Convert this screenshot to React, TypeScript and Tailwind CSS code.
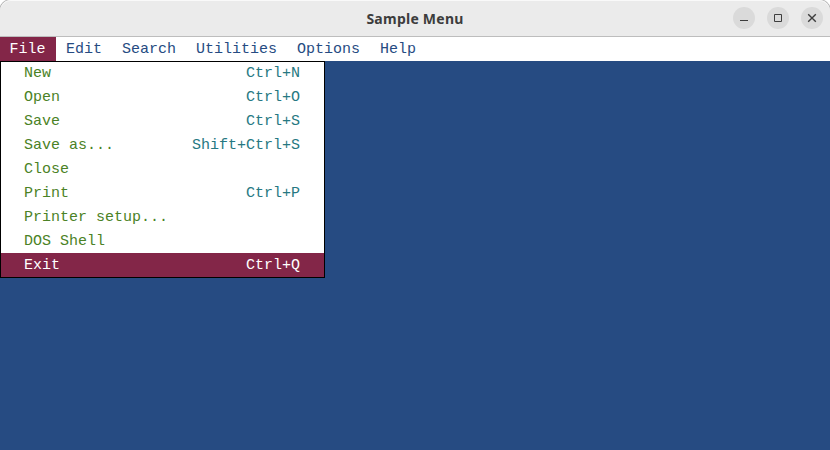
import type { ReactNode } from "react";

type Item = { label: string; shortcut?: string };

const menus = ["File", "Edit", "Search", "Utilities", "Options", "Help"];

const items: Item[] = [
  { label: "New", shortcut: "Ctrl+N" },
  { label: "Open", shortcut: "Ctrl+O" },
  { label: "Save", shortcut: "Ctrl+S" },
  { label: "Save as...", shortcut: "Shift+Ctrl+S" },
  { label: "Close" },
  { label: "Print", shortcut: "Ctrl+P" },
  { label: "Printer setup..." },
  { label: "DOS Shell" },
  { label: "Exit", shortcut: "Ctrl+Q" },
];

function WindowButton({ label, children }: { label: string; children: ReactNode }) {
  return (
    <button aria-label={label} className="size-[22px] rounded-full bg-[#dadada]">
      <svg viewBox="0 0 22 22" className="size-[22px]" fill="none" stroke="#3d3d3d">
        {children}
      </svg>
    </button>
  );
}

function TitleBar() {
  return (
    <header className="grid h-[37px] grid-cols-[1fr_auto_1fr] items-center rounded-t-[11px] border-b border-[#bdbdbd] bg-[#ebebeb] shadow-[inset_0_1px_0_#f9f9f9,0_0_0_1px_#b5b5b5]">
      <div />
      <h1 className="pt-0.5 font-['Noto_Sans',sans-serif] text-[14px] leading-[34px] font-bold tracking-[0.24px] text-[#3d3d3d]">
        Sample Menu
      </h1>
      <div className="flex justify-end gap-3 pr-[7px]">
        <WindowButton label="Minimize">
          <path d="M7 13.5h8" />
        </WindowButton>
        <WindowButton label="Maximize">
          <path d="M7.5 7.5h7v7h-7z" />
        </WindowButton>
        <WindowButton label="Close">
          <path d="M7.2 7.2l7.6 7.6M14.8 7.2l-7.6 7.6" strokeWidth="1.4" />
        </WindowButton>
      </div>
    </header>
  );
}

export default function App() {
  return (
    <div className="flex h-[450px] w-[830px] flex-col overflow-hidden bg-white font-['Liberation_Mono',monospace] text-[15px] leading-[26px]">
      <TitleBar />
      <nav className="flex h-6 bg-white">
        {menus.map((name) => (
          <div
            key={name}
            className={name === "File" ? "bg-[#832648] pr-[10.5px] pl-[9.5px] text-white" : "px-2.5 text-[#264b82]"}
          >
            {name}
          </div>
        ))}
      </nav>
      <main className="flex-1 bg-[#264b82]">
        <div className="h-[217px] w-[325px] overflow-hidden border border-black bg-white">
          <ul className="-mt-px">
            {items.map(({ label, shortcut }) => (
              <li
                key={label}
                className={
                  label === "Exit"
                    ? "flex h-6 justify-between bg-[#832648] pr-6 pl-[23px] text-white"
                    : "flex h-6 justify-between pr-6 pl-[23px] text-[#4b8226]"
                }
              >
                <span>{label}</span>
                {shortcut && (
                  <span className={label === "Exit" ? "text-white" : "text-[#267882]"}>{shortcut}</span>
                )}
              </li>
            ))}
          </ul>
        </div>
      </main>
    </div>
  );
}
